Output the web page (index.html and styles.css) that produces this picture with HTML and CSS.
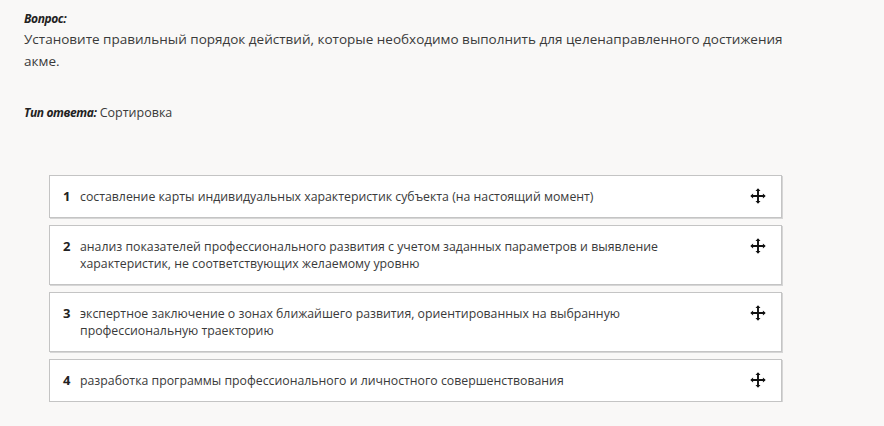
FILE: index.html
```html
<!DOCTYPE html>
<html lang="ru">
<head>
  <meta charset="UTF-8" />
  <title>Вопрос - Сортировка</title>
  <meta name="viewport" content="width=device-width, initial-scale=1" />
  <link rel="stylesheet" href="styles.css">
</head>
<body>

  <!-- QUESTION -->
  <div class="question">
    <div class="label">Вопрос:</div>
    <div class="question-text">Установите правильный порядок действий, которые необходимо выполнить для целенаправленного достижения акме.</div>
    <div class="answer-type"><span class="label">Тип ответа:</span> Сортировка</div>
  </div>

  <!-- SORT LIST -->
  <ul class="sort-list">
    <li class="sort-item">
      <span class="num">1</span>
      <span class="text">составление карты индивидуальных характеристик субъекта (на настоящий момент)</span>
      <svg class="move" viewBox="0 0 16 16"><path d="M8 1.5v13M1.5 8h13"/><path class="head" d="M8 0.3l2.5 2.8H5.5zM8 15.7l2.5-2.8H5.5zM0.3 8l2.8 2.5V5.5zM15.7 8l-2.8 2.5V5.5z"/></svg>
    </li>
    <li class="sort-item">
      <span class="num">2</span>
      <span class="text">анализ показателей профессионального развития с учетом заданных параметров и выявление характеристик, не соответствующих желаемому уровню</span>
      <svg class="move" viewBox="0 0 16 16"><path d="M8 1.5v13M1.5 8h13"/><path class="head" d="M8 0.3l2.5 2.8H5.5zM8 15.7l2.5-2.8H5.5zM0.3 8l2.8 2.5V5.5zM15.7 8l-2.8 2.5V5.5z"/></svg>
    </li>
    <li class="sort-item">
      <span class="num">3</span>
      <span class="text">экспертное заключение о зонах ближайшего развития, ориентированных на выбранную профессиональную траекторию</span>
      <svg class="move" viewBox="0 0 16 16"><path d="M8 1.5v13M1.5 8h13"/><path class="head" d="M8 0.3l2.5 2.8H5.5zM8 15.7l2.5-2.8H5.5zM0.3 8l2.8 2.5V5.5zM15.7 8l-2.8 2.5V5.5z"/></svg>
    </li>
    <li class="sort-item">
      <span class="num">4</span>
      <span class="text">разработка программы профессионального и личностного совершенствования</span>
      <svg class="move" viewBox="0 0 16 16"><path d="M8 1.5v13M1.5 8h13"/><path class="head" d="M8 0.3l2.5 2.8H5.5zM8 15.7l2.5-2.8H5.5zM0.3 8l2.8 2.5V5.5zM15.7 8l-2.8 2.5V5.5z"/></svg>
    </li>
  </ul>

</body>
</html>
```

FILE: styles.css
```css
* {
  box-sizing: border-box;
}

body, html {
  margin: 0;
  padding: 0;
  font-family: 'Open Sans', 'Noto Sans', sans-serif;
  background: #f9f8f7;
  color: #3a3a3a;
}

/* QUESTION */
.question {
  padding: 9px 24px 0 24px;
  font-size: 13.5px;
  line-height: 22px;
  width: 824px;
}

.question > .label {
  line-height: 19px;
}

.label {
  font-weight: bold;
  font-style: italic;
  font-size: 12px;
  letter-spacing: -0.4px;
  color: #222;
}

.answer-type {
  margin-top: 30px;
  font-size: 12.5px;
}

/* SORT LIST */
.sort-list {
  list-style: none;
  margin: 51px 0 0 49px;
  padding: 0;
  width: 733px;
  display: flex;
  flex-direction: column;
  gap: 7px;
}

.sort-item {
  display: flex;
  align-items: flex-start;
  background: #fff;
  border: 1px solid #c4c4c4;
  box-shadow: 1px 1px 0 #d6d6d6;
  padding: 12px 15px 12px 13px;
  font-size: 12.3px;
  line-height: 17px;
}

.num {
  font-weight: bold;
  font-size: 13px;
  width: 17px;
  flex-shrink: 0;
  color: #222;
}

.text {
  flex: 1;
  padding-right: 80px;
}

.move {
  width: 16px;
  height: 16px;
  margin-top: 0;
  flex-shrink: 0;
}

.move path {
  stroke: #111;
  stroke-width: 1.9;
  fill: none;
}

.move path.head {
  stroke: none;
  fill: #111;
}
```
